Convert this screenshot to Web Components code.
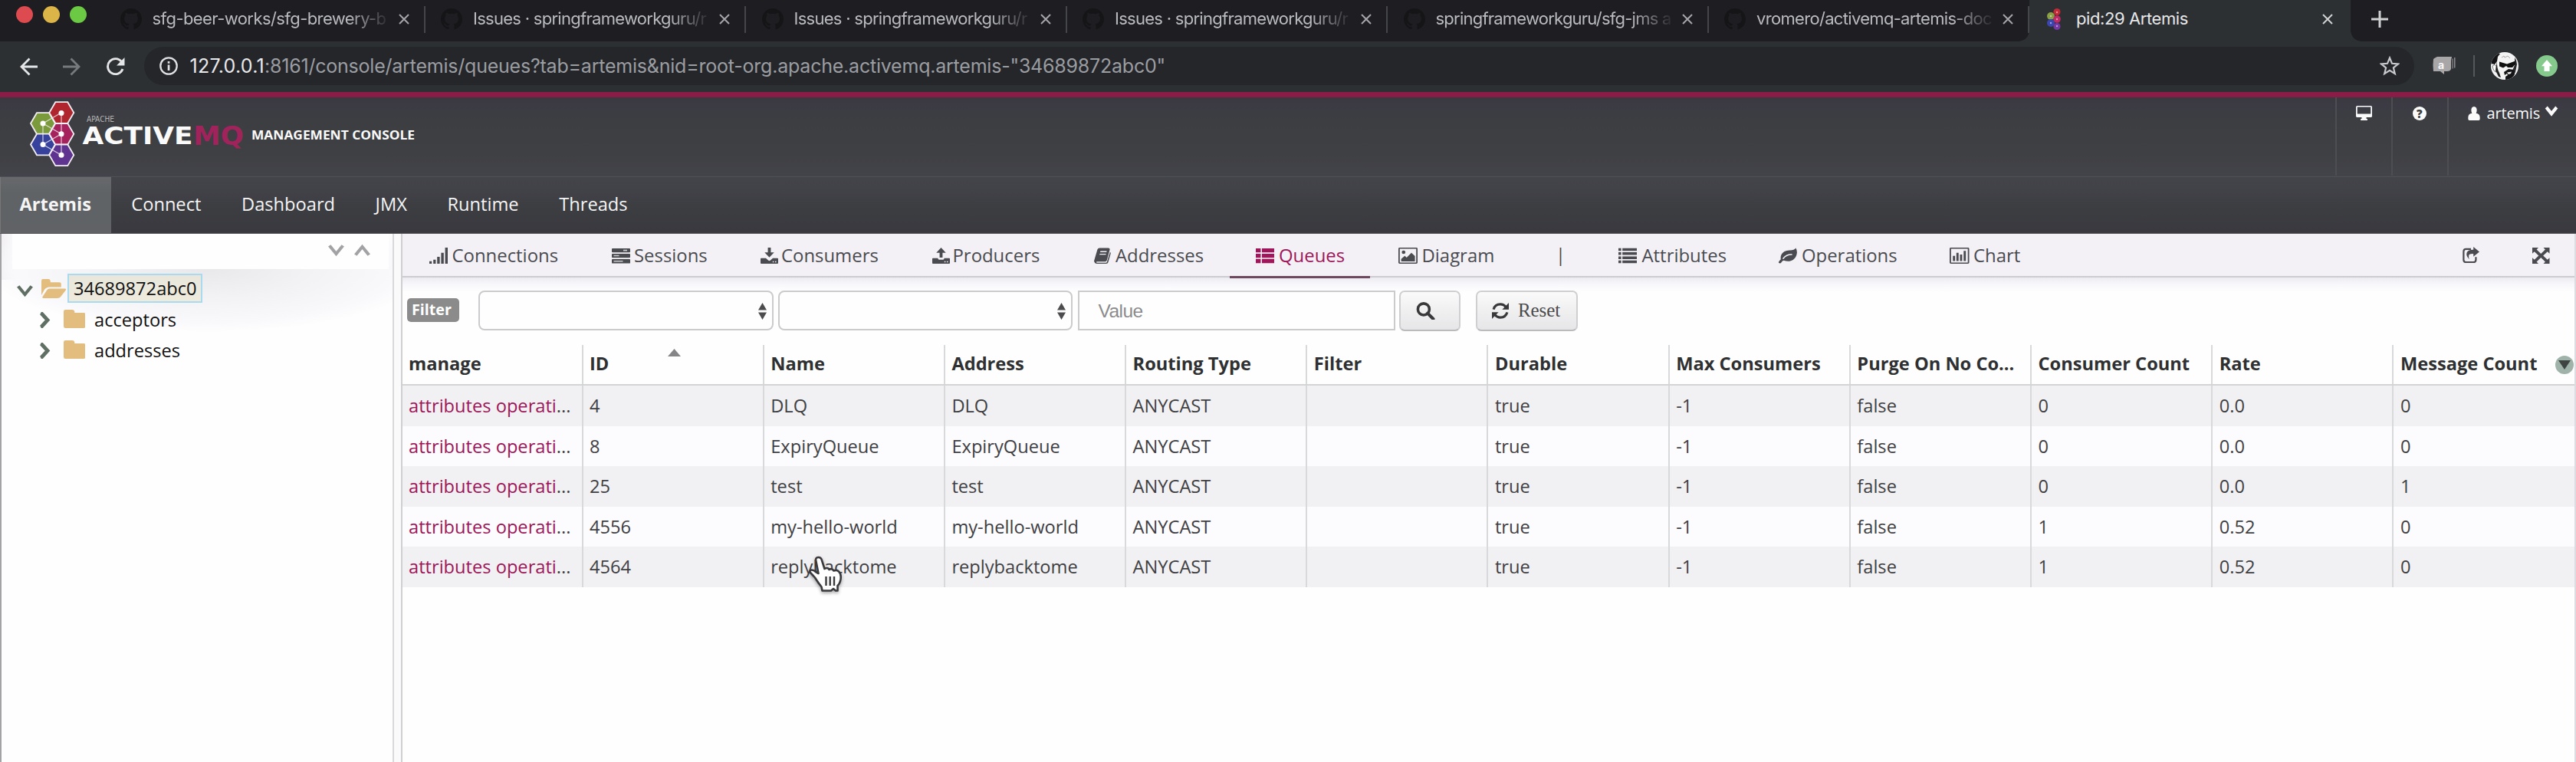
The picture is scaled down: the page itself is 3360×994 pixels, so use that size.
<!DOCTYPE html>
<html lang="en">
<head>
<meta charset="utf-8">
<title>pid:29 Artemis</title>
<style>
html,body{margin:0;padding:0;width:3360px;height:994px;overflow:hidden;background:#fefefe;font-family:"Open Sans","Noto Sans",sans-serif;font-size:23.650px;color:#3f4043}
</style>
</head>
<body>
<artemis-window></artemis-window>
<script>
const define = (name, css, html, after) => customElements.define(name, class extends HTMLElement {
  connectedCallback() {
    if (this.shadowRoot) return;
    const t = document.createElement('template');
    t.innerHTML = '<style>*{box-sizing:border-box}' + css + '</style>' + html(this);
    this.attachShadow({mode: 'open'}).appendChild(t.content.cloneNode(true));
    if (after) after(this);
  }
});
const attr = (el, n, d = '') => el.getAttribute(n) ?? d;

/* Text that is tracked so that it fills a given width */
define('fit-text', ':host{display:inline-block;white-space:pre;flex:none}span{display:inline-block;white-space:pre}', () => '<span><slot></slot></span>', el => {
  const s = el.shadowRoot.querySelector('span'), w = +attr(el, 'w');
  const n = el.textContent.length, nat = s.getBoundingClientRect().width;
  if (w && n) { s.style.letterSpacing = ((w - nat) / n) + 'px'; el.style.width = w + 'px'; }
});

const ICONS = {
  signal: '<path d="M0 18.6h3.2V22H0zM5.2 16.4h3.2V22H5.2zM10.2 12.6h3.4V22h-3.4zM15.4 7h3.4v15h-3.4zM20.6 0H24v22h-3.4z"/>',
  server: '<path d="M1 1h22q1 0 1 1v3.6q0 1-1 1H1q-1 0-1-1V2q0-1 1-1zM1 8.4h22q1 0 1 1v3.4q0 1-1 1H1q-1 0-1-1V9.400q0-1 1-1zM1 15.600h22q1 0 1 1v4q0 1-1 1H1q-1 0-1-1v-4q0-1 1-1z"/><path d="M15 3h5v1.600h-5zM2.500 10.300h7v1.600h-7zM2.500 17.800h12v1.600h-12z" fill="#c9c8cc"/>',
  down: '<path d="M10 0h4v6.500h4.500L12 13.400 5.500 6.500H10z"/><path d="M1 14.300h6.300l3.100 3.100q1.600 1.300 3.200 0l3.100-3.100H23q1 0 1 1V21q0 1-1 1H1q-1 0-1-1v-5.700q0-1 1-1z"/><path d="M16.500 18.600h1.600v1.500h-1.600zM19.800 18.600h1.600v1.500h-1.600z" fill="#f3f1f5"/>',
  up: '<path d="M10 13.500h4V7h4.500L12 0 5.500 7H10z"/><path d="M1 14.300h6.800v.6q0 1.500 1.500 1.500h5.400q1.500 0 1.500-1.500v-.6H23q1 0 1 1V21q0 1-1 1H1q-1 0-1-1v-5.700q0-1 1-1z"/><path d="M16.500 18.600h1.600v1.500h-1.600zM19.800 18.600h1.600v1.500h-1.600z" fill="#f3f1f5"/>',
  book: '<path d="M8 .5h12.500q2.500.3 1.800 2.700l-4 14q-.5 1.800-2.600 1.800H4.500q-1.500 0-1.200.9.300.9 1.700.9h12q1 0 1.400-1.100L22.800 6q1.200.8.9 2.200l-3.600 12q-.6 1.800-2.600 1.800H4q-2.500 0-3.600-2.400-.5-1.200 0-2.500L4.800 2.700Q5.600.5 8 .5z"/><path d="M9.200 4.800h9l-.5 1.500h-9zM8.200 8.300h9l-.5 1.500h-9z" fill="#f3f1f5"/>',
  thlist: '<path d="M0 1h6.400v5.600H0zM8 1h16v5.600H8zM0 8.300h6.400v5.500H0zM8 8.300h16v5.500H8zM0 15.500h6.400v5.700H0zM8 15.500h16v5.700H8z"/>',
  image: '<path fill-rule="evenodd" d="M1.500 0h21Q24 0 24 1.500v19q0 1.500-1.500 1.500h-21Q0 22 0 20.500v-19Q0 0 1.500 0zM1.700 1.700v18.600h20.600V1.700z"/><circle cx="6.500" cy="6.300" r="2.300"/><path d="M3.500 18.800v-3.300L8 11.300l2.300 2.200 6-6.500 4.400 4.600v7.200z"/>',
  list: '<path d="M0 .8h3.600v3.600H0zM5.200.8H24v3.600H5.200zM0 6.400h3.600V10H0zM5.200 6.400H24V10H5.200zM0 12h3.600v3.600H0zM5.200 12H24v3.600H5.200zM0 17.600h3.600v3.600H0zM5.200 17.600H24v3.600H5.200z"/>',
  leaf: '<path fill-rule="evenodd" d="M22.300.5Q24 3 23.900 7q-.6 8.300-8 11-4 1.400-9.300-.4-1.900 0-3.200 2.700Q2 22.300 0 20.600q-.5-1.400 2.800-4.700Q1.700 9 7.500 5.200 10.500 3.400 15 3.600 20.500 3.500 22.300.5zM5.300 14.300q4.700-6 12-5.600 1 .9 0 1.600-6.700-.2-11 5.300-1.600.2-1-1.300z"/>',
  chart: '<path fill-rule="evenodd" d="M1.500 0h21Q24 0 24 1.500v19q0 1.500-1.500 1.500h-21Q0 22 0 20.500v-19Q0 0 1.500 0zM1.700 1.700v18.600h20.600V1.700z"/><path d="M4 11.300h2.700v7H4zM8.300 7H11v11.300H8.300zM12.700 9.500h2.700v8.800h-2.700zM17.200 4.500h2.700v13.800h-2.700z"/>',
  share: '<path d="M12 3H5Q1.500 3 1.500 6.500v11Q1.500 21 5 21h10.500q3.500 0 3.500-3.500V14" fill="none" stroke="currentColor" stroke-width="2.400"/><path d="M15.500 0 24 6.700l-8.500 6.700V9.600q-5.500-.5-6.500 1.900-.7 2.500.8 5.500-5.200-4.600-3.800-9Q7.600 3.800 15.500 4z"/>',
  expand: '<path d="M0 0h8.500L6 2.700l6 5.600 6-5.600L15.500 0H24v8l-2.900-2.400-6 5.400 6 5.400L24 14v8h-8.500l2.500-2.700-6-5.600-6 5.600L8.500 22H0v-8l2.900 2.400 6-5.400-6-5.400L0 8z"/>',
  search: '<circle cx="9.500" cy="9" r="7.200" fill="none" stroke="currentColor" stroke-width="3.400"/><path d="m14.500 14 7 7" stroke="currentColor" stroke-width="4" stroke-linecap="round"/>',
  refresh: '<g fill="none" stroke="currentColor" stroke-width="3.500"><path d="M2.300 9Q4.300 2 12 2q4.800 0 8 4"/><path d="M21.700 13Q19.700 20 12 20q-4.800 0-8-4"/></g><path d="M24 0v9.200h-9.400zM0 22v-9.200h9.400z"/>',
  monitor: '<path fill-rule="evenodd" d="M2 0h20q2 0 2 2v13.500q0 2-2 2h-6.500v2.200H17V22H7v-2.300h1.500v-2.200H2q-2 0-2-2V2Q0 0 2 0zm0 1.800v10.500h20V1.800z"/>',
  user: '<path d="M12 0q5.300.5 5.500 5.500 0 3-1.600 5.200 7.200.5 7.600 6.300V20q0 2-2.500 2H3q-2.500 0-2.500-2v-3q.4-5.800 7.600-6.300Q6.500 8.500 6.500 5.500 6.700.5 12 0z"/>',
  chevdown: '<path d="m3 5 9 10 9-10" fill="none" stroke="currentColor" stroke-width="5.500"/>',
  chevthin: '<path d="m2 3 10 14L22 3" fill="none" stroke="currentColor" stroke-width="4.800"/>',
  chevright: '<path d="m5 1 13 10L5 21" fill="none" stroke="currentColor" stroke-width="6"/>',
  folder: '<path d="M2 0h7.500q2 0 2.500 2v1.600h10q2 0 2 2V20q0 2-2 2H2q-2 0-2-2V2Q0 0 2 0z"/>',
  folderopen: '<path d="M0 18.500V2Q0 0 1.500 0h5.300q1.700 0 2 2v1.700h8.500q2 0 2 2v3.500H8q-3.500.2-5 3z"/><path d="M8 11h15q1.600.3.700 1.900l-4.800 7.400Q18 22 15.500 22H1.800q-1.400-.3-.7-1.600L5.500 12.600Q6.300 11 8 11z"/>'
};
define('ui-icon', ':host{display:block;flex:none}svg{display:block;width:100%;height:100%}', el => {
  el.style.width = attr(el, 'w', '24') + 'px'; el.style.height = attr(el, 'h', '21') + 'px';
  return `<svg viewBox="0 0 24 22" preserveAspectRatio="none" fill="currentColor">${ICONS[attr(el, 'name')]}</svg>`;
});

/* ---------- browser chrome ---------- */
define('browser-tab', `
:host{display:flex;width:418.500px;height:54px;align-items:center;position:relative;color:#b9bbbe;font:22px Inter,Roboto,sans-serif;flex:none}
.fav{width:28px;height:28px;margin-left:20.500px;flex:none;margin-top:-5px}
.t{width:308px;margin-left:14px;overflow:hidden;white-space:pre;height:54px;line-height:49px;-webkit-mask-image:linear-gradient(90deg,#000 255px,rgba(0,0,0,.1) 306px)}
.x{width:14px;height:14px;margin:-4px 0 0 13px;flex:none}
.sep{width:2px;height:35px;background:#45464a;margin:-3px 0 0 auto;flex:none}
:host([active]){background:#2d3033;color:#e6e7e9}
:host([active]) .fav{width:20px;margin-left:22px}:host([active]) .t{margin-left:19px;-webkit-mask-image:none}:host([active]) .x{margin-left:13px}
:host([active]) .sep{visibility:hidden}
:host([active])::before,:host([active])::after{content:"";position:absolute;bottom:0;width:14px;height:14px}
:host([active])::before{left:-14px;background:radial-gradient(circle at 0 0,transparent 13.500px,#2d3033 14px)}
:host([active])::after{right:-14px;background:radial-gradient(circle at 100% 0,transparent 13.500px,#2d3033 14px)}
`, el => {
  const act = el.hasAttribute('active');
  const fav = act
    ? '<svg class="fav" viewBox="0 0 20 28"><circle cx="14" cy="4.500" r="4.500" fill="#c42a35"/><circle cx="6" cy="10" r="5" fill="#8aa044"/><circle cx="14" cy="14" r="4.800" fill="#c02a67"/><circle cx="6" cy="19" r="5" fill="#3a46ae"/><circle cx="14" cy="23.500" r="4.500" fill="#7537a5"/><g fill="#fff" opacity=".5"><circle cx="14" cy="5" r="1.200"/><circle cx="6" cy="10" r="1.200"/><circle cx="14" cy="14" r="1.200"/><circle cx="6" cy="19" r="1.200"/><circle cx="14" cy="23" r="1.200"/></g></svg>'
    : '<svg class="fav" viewBox="0 0 16 16"><path fill="#151518" d="M8 0C3.580 0 0 3.580 0 8c0 3.540 2.290 6.530 5.470 7.590.4.070.55-.17.55-.38 0-.19-.01-.82-.01-1.490-2.010.37-2.530-.49-2.690-.94-.09-.23-.48-.94-.82-1.130-.28-.15-.68-.52-.01-.53.63-.01 1.080.58 1.230.82.72 1.210 1.870.87 2.330.66.07-.52.28-.87.51-1.070-1.780-.2-3.640-.89-3.640-3.950 0-.87.31-1.590.82-2.150-.08-.2-.36-1.020.08-2.120 0 0 .67-.21 2.200.82.64-.18 1.320-.27 2-.27s1.360.09 2 .27c1.530-1.040 2.200-.82 2.200-.82.44 1.100.16 1.920.08 2.120.51.56.82 1.270.82 2.150 0 3.070-1.870 3.750-3.650 3.950.29.25.54.73.54 1.480 0 1.070-.01 1.930-.01 2.200 0 .21.15.46.55.38A8.010 8.010 0 0 0 16 8c0-4.420-3.580-8-8-8z"/></svg>';
  return fav + `<div class="t"><fit-text w="${attr(el, 'w')}">${attr(el, 'label')}</fit-text></div>
  <svg class="x" viewBox="0 0 14 14"><path d="M1 1l12 12M13 1 1 13" stroke="${act ? '#cfd1d3' : '#a4a6a9'}" stroke-width="2"/></svg><div class="sep"></div>`;
});

define('browser-tabs', `
:host{display:flex;height:54px;background:#1e1d21;align-items:center;overflow:hidden}
.lights{display:flex;gap:13px;width:136px;padding-left:21px;height:54px;align-items:flex-start;padding-top:8px;flex:none}
i{width:22px;height:22px;border-radius:50%}
.plus{width:22px;height:22px;margin:-4px 0 0 27px}
`, () => `<div class="lights"><i style="background:#dd4b50"></i><i style="background:#dcb548"></i><i style="background:#6cc944"></i></div>
<browser-tab w="305" label="sfg-beer-works/sfg-brewery-b"></browser-tab>
<browser-tab w="304" label="Issues · springframeworkguru/r"></browser-tab>
<browser-tab w="304" label="Issues · springframeworkguru/r"></browser-tab>
<browser-tab w="304" label="Issues · springframeworkguru/r"></browser-tab>
<browser-tab w="307" label="springframeworkguru/sfg-jms a"></browser-tab>
<browser-tab w="307" label="vromero/activemq-artemis-doc"></browser-tab>
<browser-tab active w="146" label="pid:29 Artemis"></browser-tab>
<svg class="plus" viewBox="0 0 22 22"><path d="M11 0v22M0 11h22" stroke="#cfd1d3" stroke-width="3"/></svg>`);

define('address-bar', `
:host{display:flex;height:65.500px;background:#2d3033;align-items:center;font:25px Inter,Roboto,sans-serif}
svg{flex:none;display:block}
.nav{display:flex;width:188px;padding-left:26px;align-items:center}
.pill{display:flex;align-items:center;width:2961px;height:50px;border-radius:25px;background:#25262a;padding-left:20px;color:#9a9da1;margin-top:-2px}
.pill b{font-weight:400;color:#e8e9eb;display:flex;margin-left:15.500px}
.star{margin-left:auto;margin-right:19px}
.tools{display:flex;align-items:center;height:50px;margin-top:-2px}
`, () => `<div class="nav">
<svg width="23" height="24" viewBox="0 0 23 24"><path d="M23 12H2.500M12.500 1.500 2 12l10.500 10.500" fill="none" stroke="#e4e5e7" stroke-width="2.800"/></svg>
<svg width="23" height="24" viewBox="0 0 23 24" style="margin-left:33px"><path d="M0 12h20.500M10.500 1.500 21 12 10.500 22.500" fill="none" stroke="#77797c" stroke-width="2.800"/></svg>
<svg width="25" height="24" viewBox="0 0 25 24" style="margin-left:33px"><path d="M20.500 5.500A10 10 0 1 0 22 15" fill="none" stroke="#e4e5e7" stroke-width="2.900"/><path d="M24.500 0v10.500H14z" fill="#e4e5e7"/></svg></div>
<div class="pill"><svg width="24" height="24" viewBox="0 0 24 24"><circle cx="12" cy="12" r="10.700" fill="none" stroke="#dfe0e2" stroke-width="2.300"/><path d="M10.700 10.500h2.700V18h-2.700zM10.700 6h2.700v2.700h-2.700z" fill="#dfe0e2"/></svg>
<b><fit-text w="97.500">127.0.0.1</fit-text></b><fit-text w="1175">:8161/console/artemis/queues?tab=artemis&amp;nid=root-org.apache.activemq.artemis-"34689872abc0"</fit-text>
<svg class="star" width="26" height="26" viewBox="0 0 26 26"><path d="m13 2.500 3 7.300 8 .6-6.100 5.100 1.900 7.600-6.800-4.200-6.800 4.200 1.900-7.600L2 10.400l8-.6z" fill="none" stroke="#c8cacc" stroke-width="2.200"/></svg></div>
<div class="tools">
<svg style="margin-left:24px" width="30" height="23" viewBox="0 0 30 23"><path d="M3 1.500 6 0h19q-1 3-1 8v8q-1 3-5 3h-4v4l-5-4H1q-1-8 0-16z" fill="#a9a6a8"/><path d="M25.500 2.500h1.200v13h-1.200zM28 1h1.500v13.500H28z" fill="#8b898c"/><text x="7" y="15.500" font-family="Inter" font-weight="700" font-size="14" fill="#f6f6f6">a</text></svg>
<svg style="margin-left:23px" width="2" height="28"><path d="M0 0h2v28H0z" fill="#55585b"/></svg>
<svg style="margin-left:20.500px" width="36" height="36" viewBox="0 0 36 36"><defs><clipPath id="c"><circle cx="18" cy="18" r="18"/></clipPath></defs><g clip-path="url(#c)"><rect width="36" height="36" fill="#f4f4f4"/><path d="M0 15Q1 5 9 1.500l3 .5-3 4-1 6-3 4z" fill="#131316"/><path d="M31 7q3 4 3 9l-2 10-3 6-1-8 3-7z" fill="#2a2a2e"/><path d="M2 18q3-3 5 0l0 8q-4-1-5-8z" fill="#fff" stroke="#555" stroke-width=".8"/><path d="M8 12q-.5 9 3 15l2 6-3-1-4-8z" fill="#222"/><path d="m11 12.500 10 3 11-4 0 4-4 4.500-6 0-2-2-4 2.500-5-2z" fill="#111"/><path d="m17 26 6-4 7 1 1 6-5 7h-7l0-4 3-2-1-2-3 2z" fill="#151517"/><path d="m21 26.500 6-1-1 2.500-3 1z" fill="#eee"/><path d="m14 7 3-2 1 2 4-2 3 3" fill="none" stroke="#aaa"/></g></svg>
<svg style="margin-left:23.500px" width="28" height="28" viewBox="0 0 28 28"><circle cx="14" cy="14" r="14" fill="#86c98c"/><path d="m14 6 7 8.300h-3.500V21h-7v-6.700H7z" fill="#fff"/></svg></div>`);

/* ---------- console header ---------- */
define('amq-logo', ':host{display:block;width:560px;height:103px}svg{display:block;overflow:visible}', () => {
  const hex = (cx, cy, f) => `<path d="M${cx - 16} ${cy}l8-13.800h16l8 13.800-8 13.800h-16z" fill="${f}" stroke="#f3eef4" stroke-width="1.800"/>`;
  return `<svg width="560" height="103" viewBox="0 127 560 103">
${hex(56, 161, '#7a9a3c')}${hex(56, 188.500, '#36429b')}${hex(80.300, 147, '#b0262f')}${hex(80.300, 174.800, '#a5225c')}${hex(80.300, 202.300, '#5f3390')}
<path d="M80 147v55M56 161v27.500M80 147l-24 14 24 13.800-24 13.700 24 13.800" fill="none" stroke="#f3eef4" stroke-width="1.200" opacity=".8"/>
<g fill="#fff"><circle cx="80" cy="147.500" r="3.500"/><circle cx="56" cy="161" r="3.500"/><circle cx="80" cy="174.800" r="3.500"/><circle cx="56" cy="188.500" r="3.500"/><circle cx="80" cy="202.300" r="3.500"/></g>
<g font-family="DejaVu Sans" fill="#fafafa"><text x="113" y="159.200" font-size="10" fill="#b4b4b6" textLength="36" lengthAdjust="spacingAndGlyphs">APACHE</text>
<g font-weight="700"><text x="107.500" y="188" font-size="32.500" textLength="144" lengthAdjust="spacingAndGlyphs">ACTIVE</text><text x="252" y="188.500" font-size="33" fill="#a0235b" textLength="66" lengthAdjust="spacingAndGlyphs">MQ</text>
<text x="328" y="181.800" font-size="15.500" textLength="213" lengthAdjust="spacingAndGlyphs" font-family="Open Sans">MANAGEMENT CONSOLE</text></g></g></svg>`;
});

define('console-header', `
:host{display:flex;height:111px;border-top:7px solid #8a1c48;border-bottom:1.500px solid #4d5255;background:linear-gradient(#39393f,#3c3b45 10%,#3c3e41 30%,#3f4043 70%,#43434b);color:#fafafa;justify-content:space-between}
.r{display:flex;height:102px;font-size:20px}
.c{display:flex;border-left:2px solid #4c4e52;padding-top:11px;align-items:flex-start}
.q{width:17.500px;height:18px;border-radius:50%;background:#fafafa;color:#3b3c40;font:800 15px/18px "Open Sans";text-align:center;margin-top:1px}
`, () => `<amq-logo></amq-logo><div class="r">
<div class="c" style="width:73.500px;padding-left:25.500px"><ui-icon name="monitor" w="21" h="19"></ui-icon></div>
<div class="c" style="width:72.500px;padding-left:26px"><div class="q">?</div></div>
<div class="c" style="width:168.500px;padding-left:25px"><ui-icon name="user" w="16" h="18" style="margin-top:1.500px"></ui-icon><fit-text w="69.500" style="margin-left:9px;line-height:27px;margin-top:-4px">artemis</fit-text><ui-icon name="chevdown" w="18" h="18" style="margin-left:6px;margin-top:-2px"></ui-icon></div></div>`);

define('main-nav', `
:host{display:flex;height:74px;background:linear-gradient(#434449,#424249 20%,#3d3e42 50%,#39393f);border-bottom:1px solid #55555a;color:#f4f4f5}
span{padding:0 26.300px;line-height:71px}
.on{font-weight:700;background:linear-gradient(#67686b,#5f6366 30%,#606266);border-left:1px solid #777;padding:0 26px 0 24.500px}
`, () => `<span class="on">Artemis</span><span>Connect</span><span>Dashboard</span><span>JMX</span><span>Runtime</span><span>Threads</span>`);

/* ---------- tree ---------- */
define('tree-row', `
:host{display:flex;height:40.200px;align-items:center;color:#111}
.l{line-height:34px;padding:0 5.500px 0 6px;border:2px solid transparent;margin-top:.5px;height:38px}
:host([selected]) .l{border-color:#a9daf0;background:linear-gradient(#e9e7dc,#eeebdd)}
`, el => el.hasAttribute('selected')
  ? `<ui-icon name="chevthin" w="21" h="17" style="color:#5f6f63;margin:6px 11px 0 22px"></ui-icon><ui-icon name="folderopen" w="32" h="25" style="color:#e3bd7d;margin-right:2px"></ui-icon><div class="l"><slot></slot></div>`
  : `<ui-icon name="chevright" w="16" h="21" style="color:#5f6f63;margin:2px 17px 0 47.500px"></ui-icon><ui-icon name="folder" w="28.500" h="24" style="color:#e3bd7d;margin-right:4px"></ui-icon><div class="l"><slot></slot></div>`);

define('tree-panel', `
:host{display:block;width:514px;height:690px;border-left:2px solid #a3a3a5;border-right:2px solid #d9d8db;background:radial-gradient(ellipse 290px 84px at 270px 44px,#e8e7ea,#f2f1f4 45%,#f9f8fb 85%,rgba(254,254,254,0) 100%),linear-gradient(90deg,#f1eff3,#fefefe 30px) 0 0/100% 60px no-repeat,#fefefe}
.f{margin:0 0 0 14px;width:491px;height:46.500px;background:#fefefe;display:flex;padding:13px 0 0 412px;gap:13px;color:#a2a2a4}
.t{padding-top:5px}
`, () => `<div class="f"><ui-icon name="chevthin" w="21" h="17"></ui-icon><ui-icon name="chevthin" w="21" h="17" style="transform:scaleY(-1)"></ui-icon></div>
<div class="t"><tree-row selected style="margin-left:-2px">34689872abc0</tree-row><tree-row>acceptors</tree-row><tree-row>addresses</tree-row></div>`);

/* ---------- main pane ---------- */
define('view-tab', `
:host{display:flex;align-items:center;height:58px;padding:0 0 3px 34px;position:relative;white-space:pre;font-size:23.900px}
.i{width:var(--gap);flex:none;padding-top:2px}
:host([active]){color:#a0165a}
:host([active])::after{content:"";position:absolute;left:0;bottom:0;width:183px;height:2.500px;background:#6e4860}
`, el => { el.style.setProperty('--gap', attr(el, 'g') + 'px'); return `<div class="i"><ui-icon name="${attr(el, 'icon')}" w="${attr(el, 'iw', '24')}"></ui-icon></div><slot></slot>`; });

define('view-tabs', `
:host{display:grid;height:57px;padding-left:1px;grid-template-columns:237.500px 194.500px 224px 211px 211px 185.500px 239.500px 48px 209px 223px 703px 91px 1fr;background:#f3f1f5;border-bottom:2px solid #cdccd0;align-items:start;color:#4a4b50}
.bar{line-height:55px;padding:0}.ic{padding-top:17px}
`, () => `<view-tab icon="signal" g="29.500">Connections</view-tab><view-tab icon="server" g="29.500">Sessions</view-tab><view-tab icon="down" iw="23" g="27">Consumers</view-tab><view-tab icon="up" iw="23" g="26.500">Producers</view-tab><view-tab icon="book" iw="22" g="28">Addresses</view-tab><view-tab active icon="thlist" g="30">Queues</view-tab><view-tab icon="image" iw="25" g="31">Diagram</view-tab><span class="bar">|</span><view-tab icon="list" g="30.500">Attributes</view-tab><view-tab icon="leaf" g="30">Operations</view-tab><view-tab icon="chart" iw="25.500" g="31">Chart</view-tab><div class="ic"><ui-icon name="share" w="22" h="21"></ui-icon></div><div class="ic" style="padding-top:18px"><ui-icon name="expand" w="22.500" h="21"></ui-icon></div>`);

define('filter-row', `
:host{display:flex;height:88px;padding:17.500px 0 0 6px;align-items:flex-start;background:linear-gradient(#ecebef,#f7f6fa 8px,#fefefe 19px)}
.b{width:68px;height:31px;margin:9.500px 25px 0 0;background:#8b8b8b;border-radius:5px;color:#fff;font:700 19.700px/30px "Open Sans";padding-left:6px}
.s{height:52px;border:2px solid #cbcacc;border-radius:8px;background:#fefefe;display:flex;align-items:center;justify-content:flex-end}
.s svg{margin-top:1px;display:block}
.v{width:413.500px;height:52px;border:2px solid #cbcacc;background:#fefefe;margin:0 5px 0 7.500px;padding-left:24.500px;font:24.500px/50px "Liberation Sans",sans-serif;color:#8b8b8d}
.btn{height:52.500px;border:2px solid #cfced0;border-bottom-color:#bbb;border-radius:7px;background:linear-gradient(#fafafa,#e6e5e7);display:flex;align-items:center;color:#39393b}
`, () => {
  const arrows = r => `<svg style="margin-right:${r}px" width="11" height="22" viewBox="0 0 11 22"><path d="M5.500 0 11 9.500H0zM5.500 22 0 12.500h11z" fill="#4c4c4e"/></svg>`;
  return `<div class="b">Filter</div><div class="s" style="width:384.500px;margin-right:6.500px">${arrows(6.5)}</div><div class="s" style="width:383.500px">${arrows(6.5)}</div><div class="v"><fit-text w="58">Value</fit-text></div>
<div class="btn" style="width:80px;padding-left:20px"><ui-icon name="search" w="25" h="23"></ui-icon></div>
<div class="btn" style="width:133px;margin-left:20px;padding-left:19.500px"><ui-icon name="refresh" w="22" h="21"></ui-icon><fit-text w="55" style="margin-left:12px;font:25px 'Liberation Serif',serif;color:#4a4a4c">Reset</fit-text></div>`;
});

const COLS = ['manage','ID','Name','Address','Routing Type','Filter','Durable','Max Consumers','Purge On No Co...','Consumer Count','Rate','Message Count'];
const ROWS = [['4','DLQ','0','0.0','0'],['8','ExpiryQueue','0','0.0','0'],['25','test','0','0.0','1'],['4556','my-hello-world','1','0.52','0'],['4564','replybacktome','1','0.52','0']];
define('queue-table', `
:host{display:block;white-space:nowrap}
.r{display:grid;grid-template-columns:233.500px repeat(11,236.200px);height:52.600px;line-height:52px}
.r>div{padding-left:8.500px;border-left:2px solid #d8d9da;display:flex;overflow:visible}
.r>div:first-child{border-left:0;padding-left:8px}
.h{height:53.500px;border-bottom:2px solid #d3d5d5;font-weight:700;line-height:48.500px;color:#2f3032;background:#fefefe}
.odd{background:#f1f0f2}.even{background:#fcfbfe}
a{color:#9e1659}
.sort{width:17px;height:10px;margin:5px 0 0 77px}
.menu{width:24px;height:24px;margin:14px 0 0 auto;flex:none}
`, () => `<div class="r h">${COLS.map((c, i) => `<div>${c}${i === 1 ? '<svg class="sort" viewBox="0 0 17 10"><path d="M8.500 0 17 10H0z" fill="#858587"/></svg>' : ''}${i === 11 ? '<svg class="menu" viewBox="0 0 24 24"><circle cx="12" cy="12" r="12" fill="#9fb3aa"/><path d="M4 6h16l-8 12z" fill="#3d4441"/></svg>' : ''}</div>`).join('')}</div>`
 + ROWS.map((r, i) => `<div class="r ${i % 2 ? 'even' : 'odd'}">` + ['<a>attributes operati</a>...', r[0], r[1], r[1], 'ANYCAST', '', 'true', '-1', 'false', r[2], r[3], r[4]].map(c => `<div>${c}</div>`).join('') + '</div>').join(''));

define('main-pane', `:host{display:block;width:2836.500px;height:690px;border-left:2px solid #cfced1;border-right:2px solid #dddce0;background:#fefefe;overflow:hidden}`,
  () => '<view-tabs></view-tabs><filter-row></filter-row><queue-table></queue-table>');

define('hand-cursor', ':host{display:block;position:absolute;left:1053px;top:724px;width:50px;height:54px}svg{filter:drop-shadow(0 2px 2px rgba(0,0,0,.35))}',
  () => `<svg width="50" height="54" viewBox="0 0 50 54"><path d="M11.500 8.500Q10 3 14.500 3 18 3 19 7l3.500 11q4-2.500 6 1 4-2 6 1.500 4-1.500 6.500 1 3.500 3 2.500 10-1 6-4 8.500v6.500H37l-3-2.500-3 2.500H19.500l-1-5Q14 36 10 29.500 6 25 4 23q-1.500-2.500 1-3.500 3-.5 6 2.500l3.500 2z" fill="#fefefe" stroke="#3a3a3d" stroke-width="2.600" stroke-linejoin="round"/><path d="M24.500 28v12M29.700 28v12M35 28v12" stroke="#3a3a3d" stroke-width="2.400"/></svg>`);

define('artemis-window', ':host{display:block;position:relative;width:3360px;height:994px;overflow:hidden}.body{display:flex;gap:9px;background:#fafafb}',
  () => '<browser-tabs></browser-tabs><address-bar></address-bar><console-header></console-header><main-nav></main-nav><div class="body"><tree-panel></tree-panel><main-pane></main-pane></div><hand-cursor></hand-cursor>');
</script>
</body>
</html>
